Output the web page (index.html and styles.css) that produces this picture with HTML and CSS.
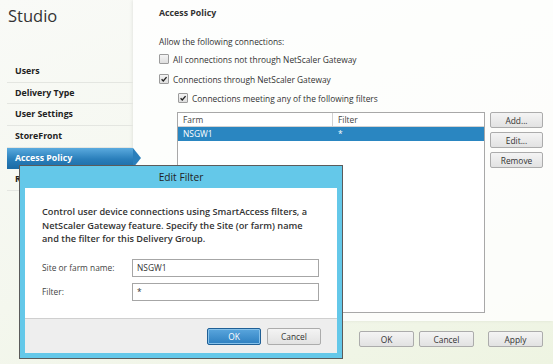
FILE: index.html
```html
<!DOCTYPE html>
<html lang="en">
<head>
  <meta charset="UTF-8" />
  <title>Studio - Access Policy</title>
  <link rel="stylesheet" href="styles.css">
</head>
<body>

  <div class="app">
    <!-- Left wizard steps -->
    <aside class="steps">
      <h1 class="brand">Studio</h1>
      <ul class="step-list">
        <li class="step">Users</li>
        <li class="step">Delivery Type</li>
        <li class="step">User Settings</li>
        <li class="step">StoreFront</li>
        <li class="step active">Access Policy</li>
        <li class="step">Review</li>
      </ul>
    </aside>

    <main class="content">
      <section class="panel">
        <h2 class="panel-title">Access Policy</h2>
        <p class="lead">Allow the following connections:</p>

        <label class="check first">
          <span class="box"></span>
          All connections not through NetScaler Gateway
        </label>
        <label class="check">
          <span class="box checked">
            <svg viewBox="0 0 10 10"><path d="M2 5.2 L4.1 7.4 L8.2 2.6" /></svg>
          </span>
          Connections through NetScaler Gateway
        </label>
        <label class="check indent">
          <span class="box checked">
            <svg viewBox="0 0 10 10"><path d="M2 5.2 L4.1 7.4 L8.2 2.6" /></svg>
          </span>
          Connections meeting any of the following filters
        </label>

        <div class="filters">
          <div class="grid">
            <div class="grid-head">
              <div class="col farm">Farm</div>
              <div class="col filter">Filter</div>
            </div>
            <div class="grid-row selected">
              <div class="col farm">NSGW1</div>
              <div class="col filter">*</div>
            </div>
          </div>
          <div class="side-buttons">
            <button class="btn">Add...</button>
            <button class="btn">Edit...</button>
            <button class="btn">Remove</button>
          </div>
        </div>
      </section>

      <div class="footer">
        <button class="btn wide">OK</button>
        <button class="btn wide">Cancel</button>
        <button class="btn wide apply">Apply</button>
      </div>
    </main>
  </div>

  <!-- Modal dialog -->
  <div class="dialog">
    <div class="dialog-title">Edit Filter</div>
    <div class="dialog-body">
      <p class="dialog-text">Control user device connections using SmartAccess filters, a NetScaler Gateway feature. Specify the Site (or farm) name and the filter for this Delivery Group.</p>
      <div class="field">
        <span class="field-label">Site or farm name:</span>
        <div class="input">NSGW1</div>
      </div>
      <div class="field">
        <span class="field-label">Filter:</span>
        <div class="input">*</div>
      </div>
    </div>
    <div class="dialog-footer">
      <button class="btn primary">OK</button>
      <button class="btn">Cancel</button>
    </div>
  </div>

</body>
</html>
```

FILE: styles.css
```css
/* Base reset and fonts */
* {
  margin: 0; padding: 0; box-sizing: border-box;
}
body {
  font-family: 'Open Sans', 'Noto Sans', sans-serif;
  font-size: 8.4px;
  color: #333;
  width: 553px;
  height: 364px;
  overflow: hidden;
  background: linear-gradient(160deg, #f9faf7 0%, #f4f7ee 55%, #eef4e2 100%);
  position: relative;
}

.app {
  display: flex;
  height: 100%;
}

/* Left steps */
.steps {
  width: 133px;
  padding-left: 7px;
  flex-shrink: 0;
}
.brand {
  font-size: 16.5px;
  font-weight: normal;
  color: #333;
  line-height: 20px;
  margin: 6px 0 0 1px;
  height: 52px;
}
.step-list {
  list-style: none;
  margin-top: 3px;
}
.step {
  height: 21.7px;
  line-height: 21px;
  padding-left: 8px;
  font-weight: bold;
  font-size: 8.8px;
  color: #222;
  border-bottom: 1px solid #e4e6e1;
  position: relative;
}
.step.active {
  background: linear-gradient(to bottom, #5aaade, #2a7fbb 55%, #1c6ca6);
  color: #fff;
  border-bottom-color: #1c6ca6;
}
.step.active::after {
  content: '';
  position: absolute;
  right: -8px;
  top: 0;
  border-top: 10.85px solid transparent;
  border-bottom: 10.85px solid transparent;
  border-left: 8px solid #2a7fbb;
}

/* Main content */
.content {
  flex-grow: 1;
  display: flex;
  flex-direction: column;
}
.panel {
  height: 321px;
  background: rgba(255, 255, 255, 0.78);
  box-shadow: -1px 0 3px rgba(0, 0, 0, 0.08);
  padding: 7px 0 0 26px;
}
.panel-title {
  font-size: 8.8px;
  font-weight: bold;
  color: #333;
  line-height: 12px;
}
.lead {
  margin-top: 17px;
  line-height: 12px;
}
.check {
  display: flex;
  align-items: center;
  gap: 4px;
  height: 12px;
  margin-top: 8px;
}
.check.first {
  margin-top: 5px;
}
.check.indent {
  margin-left: 19px;
  margin-top: 7px;
}
.box {
  width: 10px;
  height: 10px;
  border: 1px solid #9c9c9c;
  border-radius: 1px;
  background: linear-gradient(to bottom, #f4f4f4, #dedede);
  display: flex;
}
.box svg {
  width: 8px;
  height: 8px;
  fill: none;
  stroke: #222;
  stroke-width: 1.7;
}

.filters {
  display: flex;
  gap: 5px;
  margin: 8px 0 0 18px;
}
.grid {
  width: 308px;
  height: 201px;
  border: 1px solid #a8a8a8;
  background: #fff;
}
.grid-head,
.grid-row {
  display: flex;
  height: 14px;
  line-height: 14px;
}
.grid-head {
  border-bottom: 1px solid #d2d2d2;
  color: #444;
}
.grid-head .farm {
  border-right: 1px solid #d2d2d2;
}
.col.farm {
  width: 155px;
  padding-left: 5px;
}
.col.filter {
  padding-left: 5px;
}
.grid-row.selected {
  background: #2a86c1;
  color: #fff;
}
.side-buttons {
  display: flex;
  flex-direction: column;
  gap: 4px;
}

/* Buttons */
.btn {
  font-family: inherit;
  font-size: 8.4px;
  color: #333;
  width: 53px;
  height: 16px;
  border: 1px solid #acacac;
  border-radius: 2px;
  background: linear-gradient(to bottom, #f4f4f4, #e2e2e2);
}
.btn.primary {
  background: linear-gradient(to bottom, #5aa6dd, #2d7fc0);
  border-color: #1f5f95;
  color: #fff;
  box-shadow: inset 0 0 0 1px #86c1ea;
}

.footer {
  display: flex;
  gap: 5px;
  padding: 10px 0 0 226px;
}
.btn.wide {
  width: 55px;
}
.btn.apply {
  margin-left: 9px;
}

/* Edit Filter dialog */
.dialog {
  position: absolute;
  left: 19px;
  top: 165px;
  width: 324px;
  height: 194px;
  border: 1px solid #5b5b5b;
  background: #64c8e9;
  padding: 0 5px 5px;
  display: flex;
  flex-direction: column;
}
.dialog-title {
  height: 22px;
  line-height: 22px;
  text-align: center;
  font-size: 10.2px;
  color: #222;
}
.dialog-body {
  background: #fff;
  flex-grow: 1;
  padding: 17px 16px 0 17px;
}
.dialog-text {
  font-weight: 600;
  font-size: 9.2px;
  line-height: 13.5px;
  color: #333;
}
.field {
  display: flex;
  align-items: center;
  margin-top: 6px;
}
.dialog-text + .field {
  margin-top: 13px;
}
.field-label {
  width: 90px;
  color: #444;
}
.input {
  width: 187px;
  height: 18px;
  border: 1px solid #a6a6a6;
  line-height: 16px;
  padding-left: 4px;
  background: #fff;
}
.dialog-footer {
  height: 35px;
  background: #eeeeee;
  border-top: 1px solid #cfcfcf;
  display: flex;
  justify-content: flex-end;
  gap: 6px;
  padding: 9px 16px 0 0;
}
.dialog-footer .btn {
  width: 54px;
  height: 17px;
}
```
